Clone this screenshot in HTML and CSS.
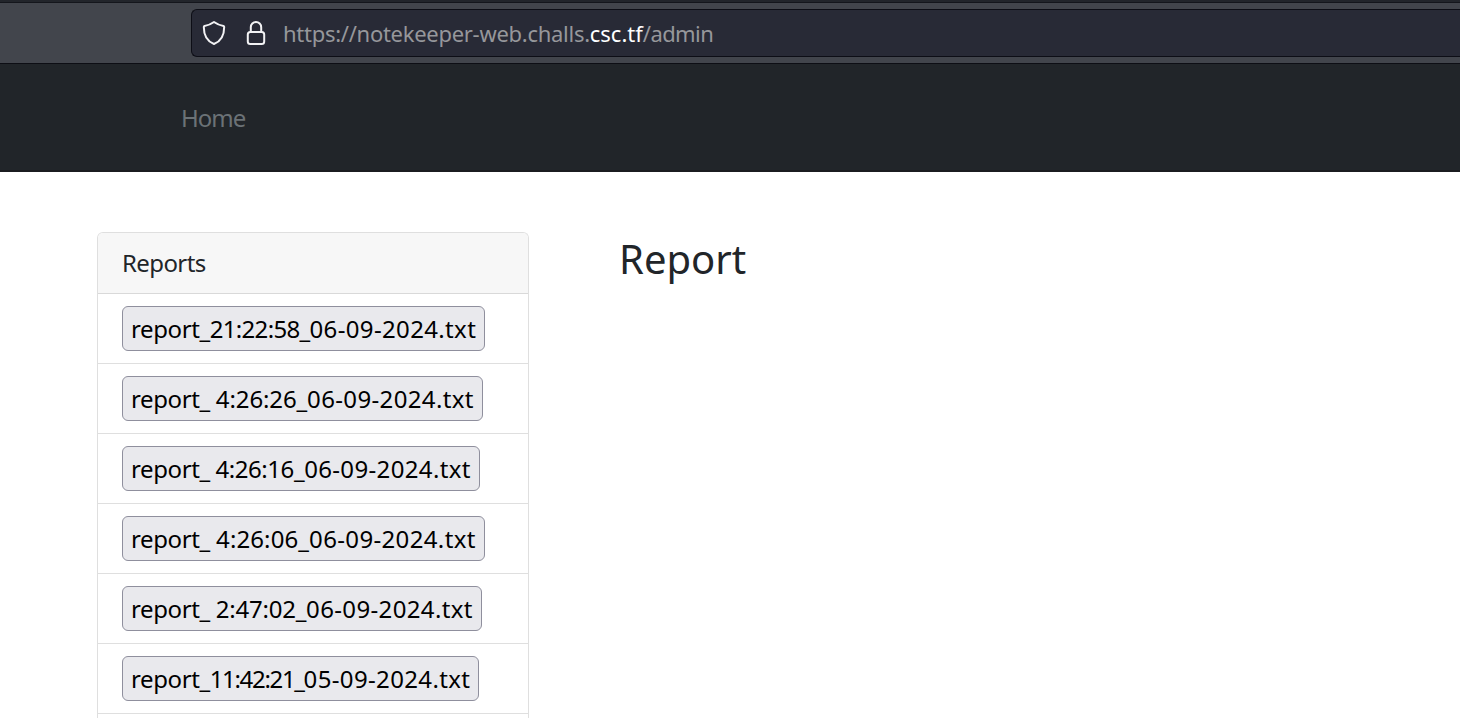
FILE: index.html
```html
<!DOCTYPE html>
<html lang="en">
<head>
<meta charset="utf-8">
<title>Report</title>
<link rel="stylesheet" href="styles.css">
</head>
<body>
<div class="toolbar">
  <div class="urlbar">
    <svg class="icon" width="24" height="26" viewBox="0 0 24 26"><path d="M12 2 C14.500 3.800 18 5.400 21.500 6 Q22.200 6.200 22.200 7 C22.200 15.500 18.500 21.500 12 24 C5.500 21.500 1.800 15.500 1.800 7 Q1.800 6.200 2.500 6 C6 5.400 9.500 3.800 12 2Z"/></svg>
    <svg class="icon" width="20" height="26" viewBox="0 0 20 26"><rect x="1.800" y="12" width="16.400" height="12" rx="2.500"/><path d="M4.800 12V7.200a5.200 5.200 0 0 1 10.400 0V12"/></svg>
    <span class="url">https://notekeeper-web.challs.<span class="domain">csc.tf</span><span class="path">/admin</span></span>
  </div>
</div>
<nav class="navbar"><a class="nav-link">Home</a></nav>
<main class="content">
  <section class="card">
    <div class="card-header">Reports</div>
    <ul class="list">
      <li><button class="report w1"><span class="name">report_</span><span class="time">21:22:58_</span><span class="date">06-09-2024.txt</span></button></li>
      <li><button class="report w2"><span class="name">report_</span><span class="time"> 4:26:26_</span><span class="date">06-09-2024.txt</span></button></li>
      <li><button class="report w3"><span class="name">report_</span><span class="time"> 4:26:16_</span><span class="date">06-09-2024.txt</span></button></li>
      <li><button class="report w4"><span class="name">report_</span><span class="time"> 4:26:06_</span><span class="date">06-09-2024.txt</span></button></li>
      <li><button class="report w5"><span class="name">report_</span><span class="time"> 2:47:02_</span><span class="date">06-09-2024.txt</span></button></li>
      <li><button class="report w6"><span class="name">report_</span><span class="time">11:42:21_</span><span class="date">05-09-2024.txt</span></button></li>
    </ul>
  </section>
  <h1 class="title">Report</h1>
</main>
</body>
</html>
```
FILE: styles.css
```css
* { box-sizing: border-box; }
body {
  margin: 0;
  height: 100vh;
  display: flex;
  flex-direction: column;
  background: #fff;
  color: #212529;
  font-family: "Noto Sans", sans-serif;
  font-size: 24px;
}
.toolbar {
  flex: none;
  height: 64px;
  border-top: 2px solid #22252b;
  border-bottom: 1px solid #0d0e14;
  background: #42454c;
  box-shadow: inset 0 1px #14161c;
  padding: 7px 0 6px 191px;
}
.urlbar {
  height: 48px;
  display: flex;
  align-items: center;
  border: 1px solid #0d0e16;
  border-right: 0;
  border-radius: 6px 0 0 6px;
  background: #282a36;
  padding-left: 10px;
}
.icon {
  flex: none;
  fill: none;
  stroke: #f2f2f4;
  stroke-width: 2;
  stroke-linejoin: round;
}
.icon + .icon { margin-left: 20px; }
.url {
  margin-left: 17px;
  font-size: 22px;
  line-height: 32px;
  letter-spacing: -0.28px;
  color: #96979b;
  white-space: pre;
}
.domain { color: #fff; letter-spacing: 0; }
.path { letter-spacing: -0.6px; }
.navbar {
  flex: none;
  height: 108px;
  background: #212529;
  border-bottom: 2px solid #1b1c20;
  padding: 36px 0 0 181px;
}
.nav-link {
  display: block;
  line-height: 36px;
  letter-spacing: -1px;
  color: #6b7276;
}
.content {
  flex: 1;
  min-height: 0;
  display: flex;
  align-items: flex-start;
  padding: 60px 0 0 97px;
}
.card {
  align-self: stretch;
  width: 432px;
  border: 1px solid #dfdfdf;
  border-bottom: 0;
  border-radius: 6px 6px 0 0;
  overflow: hidden;
}
.card-header {
  height: 61px;
  padding: 12px 24px 0;
  line-height: 36px;
  letter-spacing: -0.6px;
  background: #f7f7f7;
  border-bottom: 1px solid #d9d9d9;
}
.list { margin: 0; padding: 0; list-style: none; }
.list li {
  height: 70px;
  padding: 12px 24px;
  border-bottom: 1px solid #dfdfdf;
}
.report {
  display: block;
  height: 45px;
  padding: 0 8px 0;
  border: 1px solid #8f8f9d;
  border-radius: 6px;
  background: #e9e9ed;
  color: #000;
  font: inherit;
  line-height: 36px;
  text-align: left;
  white-space: pre;
}
.name { letter-spacing: -0.4px; }
.date { letter-spacing: 0.35px; }
.w1 { width: 363px; }
.w2 { width: 361px; }
.w3 { width: 358px; }
.w4 { width: 363px; }
.w5 { width: 360px; }
.w6 { width: 357px; }
.w1 .time { letter-spacing: -0.67px; }
.w2 .time { letter-spacing: -0.11px; }
.w3 .time { letter-spacing: -0.44px; }
.w4 .time { letter-spacing: 0.11px; }
.w5 .time { letter-spacing: -0.22px; }
.w6 .time { letter-spacing: -1.33px; }
.title {
  margin: 3px 0 0 90px;
  font-size: 40px;
  font-weight: 400;
  line-height: 48px;
}
```
